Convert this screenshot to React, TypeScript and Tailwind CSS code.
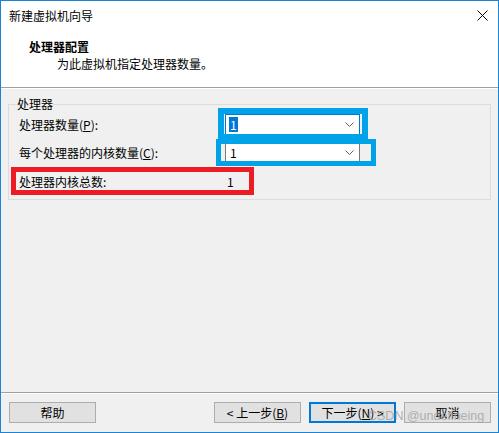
import type { ReactNode } from 'react'

const font = { fontFamily: '"Noto Sans CJK SC", "Noto Sans", sans-serif' }

function Chevron() {
  return (
    <svg width="9" height="5" viewBox="0 0 9 5" className="shrink-0">
      <polyline points="0.5,0.5 4.5,4.5 8.5,0.5" fill="none" stroke="#606060" strokeWidth="1" />
    </svg>
  )
}

function Combo({ value, focused }: { value: string; focused?: boolean }) {
  return (
    <div
      className={`w-[135px] h-[21px] bg-white border flex items-center justify-between pl-[3px] pr-[5px] ${
        focused ? 'border-[#0078d7]' : 'border-[#7a7a7a]'
      }`}
    >
      {focused ? (
        <span className="bg-[#0078d7] text-white leading-[15px] px-[1px]">{value}</span>
      ) : (
        <span className="leading-[15px] px-[1px]">{value}</span>
      )}
      <Chevron />
    </div>
  )
}

function Btn({ children, primary }: { children: ReactNode; primary?: boolean }) {
  return (
    <button
      className={`w-[87px] h-[21px] bg-[#e1e1e1] flex items-center justify-center leading-none ${
        primary ? 'border-2 border-[#0078d7]' : 'border border-[#adadad]'
      }`}
    >
      {children}
    </button>
  )
}

export default function App() {
  return (
    <div
      style={font}
      className="relative w-[499px] h-[433px] border border-[#1883d7] bg-[#f0f0f0] flex flex-col text-[12px] text-black overflow-hidden"
    >
      {/* title + header */}
      <div className="h-[87px] bg-white border-b border-[#a0a0a0] shrink-0">
        <div className="h-[29px] flex items-center justify-between pl-[8px] pr-[10px]">
          <span className="leading-[16px]">新建虚拟机向导</span>
          <svg width="11" height="11" viewBox="0 0 11 11">
            <path d="M0.5 0.5 L10.5 10.5 M10.5 0.5 L0.5 10.5" stroke="#000" strokeWidth="1" />
          </svg>
        </div>
        <div className="pl-[28px] pt-[9px]">
          <div className="font-bold leading-[16px]">处理器配置</div>
          <div className="pl-[28px] mt-[1px] leading-[16px]">为此虚拟机指定处理器数量。</div>
        </div>
      </div>
      <div className="h-px bg-white shrink-0" />

      {/* body */}
      <div className="px-[7px]">
        <fieldset className="mt-[7px] border border-[#dcdcdc] px-[8px] pb-[7px]">
          <legend className="leading-[16px] px-0">处理器</legend>
          <div className="pl-[2px] flex flex-col">
            <div className="mt-[2px] h-[21px] flex items-center">
              <span className="w-[206px] leading-[16px]">
                处理器数量(<span className="underline">P</span>):
              </span>
              <Combo value="1" focused />
            </div>
            <div className="mt-[7px] h-[21px] flex items-center">
              <span className="w-[206px] leading-[16px]">
                每个处理器的内核数量(<span className="underline">C</span>):
              </span>
              <Combo value="1" />
            </div>
            <div className="mt-[8px] h-[21px] flex items-center">
              <span className="w-[208px] leading-[16px]">处理器内核总数:</span>
              <span className="leading-[16px]">1</span>
            </div>
          </div>
        </fieldset>
      </div>

      {/* footer */}
      <div className="mt-auto border-t border-[#a0a0a0] shrink-0">
        <div className="h-px bg-white" />
        <div className="pt-[8px] pb-[9px] pl-[8px] pr-[7px] flex items-center justify-between">
          <Btn>帮助</Btn>
          <div className="flex gap-[8px]">
            <Btn>
              &lt; 上一步(<span className="underline">B</span>)
            </Btn>
            <Btn primary>
              下一步(<span className="underline">N</span>) &gt;
            </Btn>
            <Btn>取消</Btn>
          </div>
        </div>
      </div>

      {/* annotations */}
      <div className="absolute left-[217px] top-[107px] w-[150px] h-[32px] border-[6px] border-[#00a2e8] pointer-events-none" />
      <div className="absolute left-[215px] top-[138px] w-[160px] h-[27px] border-[5px] border-[#00a2e8] pointer-events-none" />
      <div className="absolute left-[10px] top-[166px] w-[243px] h-[28px] border-[5px] border-[#ed1c24] pointer-events-none" />

      {/* watermark */}
      <span
        className="absolute left-[367px] top-[407px] text-[12.5px] leading-[16px] text-[#a0a0a0]/80 pointer-events-none whitespace-nowrap"
        style={{ fontFamily: '"Liberation Sans", Arial, sans-serif' }}
      >
        CSDN @undefineing
      </span>
    </div>
  )
}
